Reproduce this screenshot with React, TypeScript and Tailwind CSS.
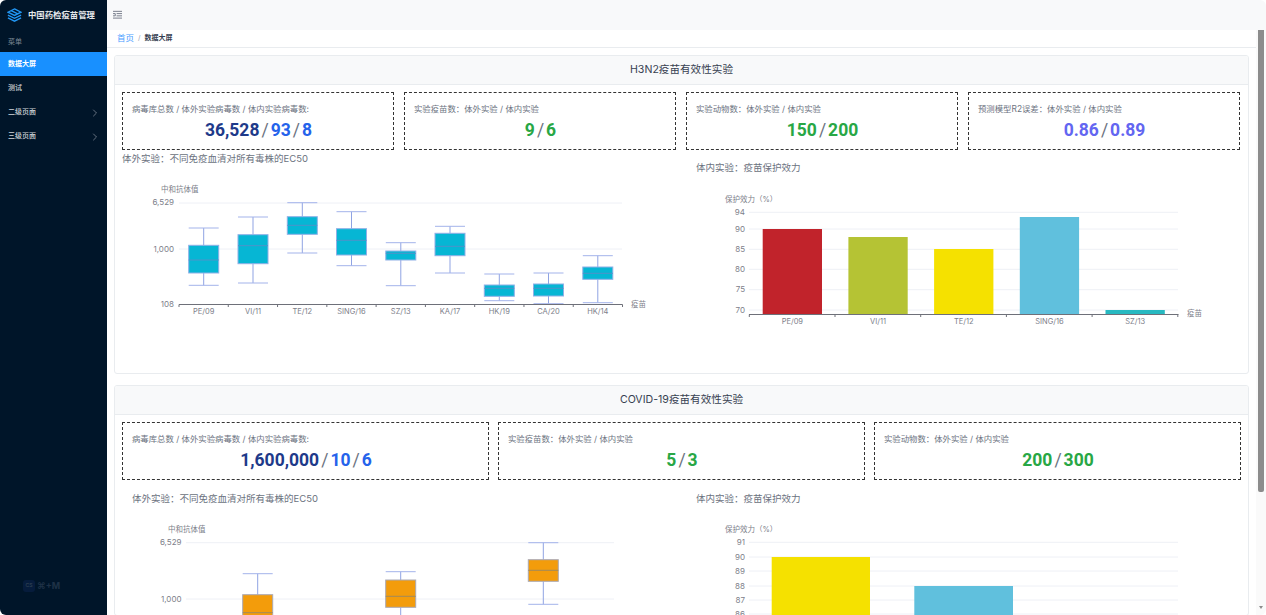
import { ChevronRight } from "lucide-react";

const labelFont = { fontFamily: "Inter, 'Noto Sans CJK SC', sans-serif" };

interface StatValue {
  text: string;
  color: string;
}

interface StatCardProps {
  label: string;
  values: StatValue[];
}

function StatCard({ label, values }: StatCardProps) {
  return (
    <div className="flex-1 h-[58px] border border-dashed border-[#333] pl-[9px] pr-2 pt-[10px]">
      <p className="text-[8.4px] leading-[12px] text-[#6b7280]">{label}</p>
      <div className="mt-[3px] flex items-center justify-center gap-[2px] text-[17.5px] leading-[24px] font-bold font-['Roboto']">
        {values.map((v, i) => (
          <span key={i} className="flex items-center gap-[2px]">
            {i > 0 && <span className="font-normal text-[#6b7280]">/</span>}
            <span style={{ color: v.color }}>{v.text}</span>
          </span>
        ))}
      </div>
    </div>
  );
}

interface BoxDatum {
  name?: string;
  cx: number;
  whiskerTop: number;
  top: number;
  median: number;
  bottom: number;
  whiskerBottom: number;
}

function BoxShape({ b, fill, edge, mid }: { b: BoxDatum; fill: string; edge: string; mid: string }) {
  const left = b.cx - 15;
  const right = b.cx + 15;
  return (
    <g>
      <line x1={b.cx} x2={b.cx} y1={b.whiskerTop} y2={b.top} stroke="#8fa3e3" strokeWidth="1" />
      <line x1={b.cx} x2={b.cx} y1={b.bottom} y2={b.whiskerBottom} stroke="#8fa3e3" strokeWidth="1" />
      <line x1={left} x2={right} y1={b.whiskerTop} y2={b.whiskerTop} stroke="#a3b3ea" strokeWidth="1" />
      <line x1={left} x2={right} y1={b.whiskerBottom} y2={b.whiskerBottom} stroke="#a3b3ea" strokeWidth="1" />
      <rect x={left} y={b.top} width="30" height={b.bottom - b.top} fill={fill} stroke={edge} strokeWidth="1" />
      <line x1={left} x2={right} y1={b.median} y2={b.median} stroke={mid} strokeWidth="1" />
    </g>
  );
}

const h3n2Boxes: BoxDatum[] = [
  { name: "PE/09", cx: 202.7, whiskerTop: 228, top: 245.3, median: 260, bottom: 273, whiskerBottom: 285.3 },
  { name: "VI/11", cx: 252, whiskerTop: 217, top: 234.7, median: 245.7, bottom: 263.7, whiskerBottom: 283 },
  { name: "TE/12", cx: 301.3, whiskerTop: 202.7, top: 216.7, median: 225.3, bottom: 234.3, whiskerBottom: 253 },
  { name: "SING/16", cx: 350.5, whiskerTop: 211.7, top: 228.7, median: 240.3, bottom: 255, whiskerBottom: 265.7 },
  { name: "SZ/13", cx: 399.8, whiskerTop: 242.7, top: 251, median: 253.3, bottom: 260, whiskerBottom: 285.7 },
  { name: "KA/17", cx: 449, whiskerTop: 226.3, top: 233.3, median: 246.3, bottom: 255.7, whiskerBottom: 273 },
  { name: "HK/19", cx: 498.3, whiskerTop: 274, top: 285, median: 288.3, bottom: 296.3, whiskerBottom: 300.7 },
  { name: "CA/20", cx: 547.5, whiskerTop: 273, top: 284, median: 288.3, bottom: 296, whiskerBottom: 303.7 },
  { name: "HK/14", cx: 596.8, whiskerTop: 255.7, top: 267, median: 273.3, bottom: 279.3, whiskerBottom: 302.7 },
];

const covidBoxes: BoxDatum[] = [
  { cx: 256.7, whiskerTop: 573.7, top: 594.7, median: 612.7, bottom: 640, whiskerBottom: 660 },
  { cx: 399.7, whiskerTop: 571.7, top: 580, median: 596.3, bottom: 607.3, whiskerBottom: 640 },
  { cx: 542.3, whiskerTop: 542.7, top: 559.7, median: 570.3, bottom: 581.3, whiskerBottom: 604.3 },
];

const gridLine = "#eef0f6";
const axisText = "#7d808a";

function H3n2BoxChart() {
  const ticks = Array.from({ length: 10 }, (_, i) => 178 + i * 49.28);
  return (
    <svg viewBox="114 175 560 150" className="w-[560px] h-[150px] block" style={labelFont}>
      <text x="160" y="192" fontSize="7.5" fill={axisText}>中和抗体值</text>
      <line x1="178" x2="621" y1="203" y2="203" stroke={gridLine} />
      <line x1="178" x2="621" y1="249" y2="249" stroke={gridLine} />
      <text x="173" y="205" fontSize="8" fill={axisText} textAnchor="end">6,529</text>
      <text x="173" y="251.500" fontSize="8" fill={axisText} textAnchor="end">1,000</text>
      <text x="173" y="306.500" fontSize="8" fill={axisText} textAnchor="end">108</text>
      {h3n2Boxes.map((b) => (
        <BoxShape key={b.name} b={b} fill="#06b6d4" edge="#8fb0e6" mid="#4f93c9" />
      ))}
      <line x1="178" x2="621.500" y1="304.500" y2="304.500" stroke="#6e7079" />
      {ticks.map((x) => (
        <line key={x} x1={x} x2={x} y1="304.500" y2="307" stroke="#6e7079" />
      ))}
      {h3n2Boxes.map((b) => (
        <text key={b.name} x={b.cx} y="314" fontSize="7.5" fill={axisText} textAnchor="middle">{b.name}</text>
      ))}
      <text x="630" y="306.500" fontSize="7.5" fill={axisText}>疫苗</text>
    </svg>
  );
}

interface BarChartProps {
  ticks: { label: string; y: number }[];
  bars: { name: string; x: number; w: number; top: number; color: string }[];
}

function H3n2BarChart({ ticks, bars }: BarChartProps) {
  const axisTicks = Array.from({ length: 6 }, (_, i) => 749.3 + i * 85.7);
  return (
    <svg viewBox="690 190 530 135" className="w-[530px] h-[135px] block" style={labelFont}>
      <text x="725" y="202" fontSize="7.5" fill={axisText}>保护效力（%）</text>
      {ticks.map((t) => (
        <g key={t.label}>
          <line x1="749" x2="1178" y1={t.y} y2={t.y} stroke={gridLine} />
          <text x="745" y={t.y + 2.7} fontSize="8" fill={axisText} textAnchor="end">{t.label}</text>
        </g>
      ))}
      {bars.map((b) => (
        <rect key={b.name} x={b.x} y={b.top} width={b.w} height={314.5 - b.top} fill={b.color} />
      ))}
      <line x1="749" x2="1178.500" y1="314.500" y2="314.500" stroke="#6e7079" />
      {axisTicks.map((x) => (
        <line key={x} x1={x} x2={x} y1="314.500" y2="317" stroke="#6e7079" />
      ))}
      {bars.map((b) => (
        <text key={b.name} x={b.x + b.w / 2} y="324" fontSize="7.5" fill={axisText} textAnchor="middle">{b.name}</text>
      ))}
      <text x="1187" y="316" fontSize="7.5" fill={axisText}>疫苗</text>
    </svg>
  );
}

function CovidBoxChart() {
  return (
    <svg viewBox="124 520 540 95" className="w-[540px] h-[95px] block" style={labelFont}>
      <text x="167" y="532" fontSize="7.5" fill={axisText}>中和抗体值</text>
      <line x1="185" x2="613" y1="542.700" y2="542.700" stroke={gridLine} />
      <line x1="185" x2="613" y1="599" y2="599" stroke={gridLine} />
      <text x="180.500" y="545" fontSize="8" fill={axisText} textAnchor="end">6,529</text>
      <text x="180.500" y="601.500" fontSize="8" fill={axisText} textAnchor="end">1,000</text>
      {covidBoxes.map((b) => (
        <BoxShape key={b.cx} b={b} fill="#f39c0b" edge="#a9a9b5" mid="#a08a5c" />
      ))}
    </svg>
  );
}

function CovidBarChart() {
  const ticks = [
    { label: "91", y: 542.3 },
    { label: "90", y: 557 },
    { label: "89", y: 571 },
    { label: "88", y: 586 },
    { label: "87", y: 600 },
    { label: "86", y: 614 },
  ];
  return (
    <svg viewBox="690 520 530 95" className="w-[530px] h-[95px] block" style={labelFont}>
      <text x="725" y="532" fontSize="7.500" fill={axisText}>保护效力（%）</text>
      {ticks.map((t) => (
        <g key={t.label}>
          <line x1="749" x2="1178" y1={t.y} y2={t.y} stroke={gridLine} />
          <text x="745" y={t.y + 2.7} fontSize="8" fill={axisText} textAnchor="end">{t.label}</text>
        </g>
      ))}
      <rect x="771.700" y="557" width="98.300" height="60" fill="#f5e100" />
      <rect x="914.300" y="586" width="98.700" height="31" fill="#60c0dd" />
    </svg>
  );
}

function Section({ title, children }: { title: string; children: React.ReactNode }) {
  return (
    <section className="border border-[#e9ecef] rounded-[3px] bg-white overflow-hidden">
      <div className="h-[29px] bg-[#f8f9fa] border-b border-[#e9ecef] flex items-center justify-center text-[10.6px] text-[#374151]">
        {title}
      </div>
      {children}
    </section>
  );
}

const blue = "#1e3a8a";
const midBlue = "#2563eb";
const green = "#28a745";
const violet = "#6366f1";

const virusLabel = "病毒库总数 / 体外实验病毒数 / 体内实验病毒数:";

const menu = [
  { label: "测试" },
  { label: "二级页面", arrow: true },
  { label: "三级页面", arrow: true },
];

export default function App() {
  const h3n2Ticks = [
    { label: "94", y: 212.3 },
    { label: "90", y: 229 },
    { label: "85", y: 249.3 },
    { label: "80", y: 269.3 },
    { label: "75", y: 289.7 },
    { label: "70", y: 310 },
  ];
  const h3n2Bars = [
    { name: "PE/09", x: 762.7, w: 59.3, top: 229, color: "#c1232b" },
    { name: "VI/11", x: 848.4, w: 59.3, top: 237, color: "#b5c334" },
    { name: "TE/12", x: 934.1, w: 59.3, top: 249, color: "#f5e100" },
    { name: "SING/16", x: 1019.8, w: 59.3, top: 217, color: "#60c0dd" },
    { name: "SZ/13", x: 1105.5, w: 59.3, top: 310, color: "#27b9c1" },
  ];

  return (
    <div
      className="h-[615px] w-[1266px] flex overflow-hidden rounded-[6px] bg-white"
      style={{ fontFamily: "Inter, 'Noto Sans CJK SC', sans-serif" }}
    >
      <aside className="w-[107px] shrink-0 bg-[#001529] text-white flex flex-col relative">
        <div className="h-[30px] flex items-center pl-[7px] gap-[6px]">
          <svg viewBox="0 0 16 16" className="w-[15px] h-[15px]" fill="none" stroke="#2196f3" strokeWidth="1.5">
            <path d="M8 1 15 4.500 8 8 1 4.500Z" />
            <path d="M1 7.500 8 11 15 7.500" />
            <path d="M1 10.500 8 14 15 10.500" />
            <path d="M4.500 2.800 11.500 6.300" />
          </svg>
          <span className="text-[8.4px] font-semibold text-[#e5e7eb]">中国药检疫苗管理</span>
        </div>
        <div className="pl-2 pt-[6px] h-[22px] text-[7px] leading-[12px] text-[#7b8794]">菜单</div>
        <div className="h-[24px] bg-[#1890ff] pl-2 pt-[1px] flex items-center text-[7px] font-semibold">数据大屏</div>
        {menu.map((m) => (
          <div key={m.label} className="h-[24px] pl-2 pr-[6px] pt-[1px] flex items-center justify-between text-[7px] font-medium text-[#d1d5db]">
            <span>{m.label}</span>
            {m.arrow && <ChevronRight className="w-[12px] h-[12px] text-[#9ca3af]" strokeWidth={1.3} />}
          </div>
        ))}
        <div className="absolute left-[23px] top-[579px] flex items-center gap-[2px] opacity-20">
          <span className="w-[12px] h-[12px] rounded-[3px] bg-[#1e3a8a] text-[5px] flex items-center justify-center">CS</span>
          <span className="text-[9px] font-bold text-[#94a3b8]">⌘+M</span>
        </div>
      </aside>

      <div className="flex-1 min-w-0 flex flex-col">
        <header className="h-[30px] shrink-0 bg-[#f8f9fa] flex items-center pl-[6px] pb-[1px]">
          <svg viewBox="0 0 10 10" className="w-[9px] h-[9px]" fill="none" stroke="#6b7280" strokeWidth="1">
            <path d="M0 1.500H10M4 4H10M4 6.500H10M0 9H10M0 4H2.500V6.500H0" />
          </svg>
        </header>
        <div className="flex-1 min-h-0 flex">
          <main className="flex-1 min-w-0 overflow-hidden">
            <div className="h-[18px] border-b border-[#e9ecef] pl-[10px] flex items-center gap-[4px] text-[7px]">
              <span className="text-[8.5px] text-[#4a9eff]">首页</span>
              <span className="text-[#9ca3af]">/</span>
              <span className="font-semibold text-[#374151]">数据大屏</span>
            </div>
            <div className="pl-[7px] pr-[7px] pt-[7px] flex flex-col gap-[11px]">
              <Section title="H3N2疫苗有效性实验">
                <div className="px-[7px] pt-[7px] flex gap-[10px] mr-[1px]">
                  <StatCard label={virusLabel} values={[{ text: "36,528", color: blue }, { text: "93", color: midBlue }, { text: "8", color: midBlue }]} />
                  <StatCard label="实验疫苗数：体外实验 / 体内实验" values={[{ text: "9", color: green }, { text: "6", color: green }]} />
                  <StatCard label="实验动物数：体外实验 / 体内实验" values={[{ text: "150", color: green }, { text: "200", color: green }]} />
                  <StatCard label="预测模型R2误差：体外实验 / 体内实验" values={[{ text: "0.86", color: violet }, { text: "0.89", color: violet }]} />
                </div>
                <div className="flex h-[223px]">
                  <div className="w-[575px] pl-[7px] pt-[1px]">
                    <p className="h-[15px] text-[9.5px] leading-[15px] text-[#6b7280]">体外实验：不同免疫血清对所有毒株的EC50</p>
                    <div className="-ml-[7px] mt-[9px]"><H3n2BoxChart /></div>
                  </div>
                  <div className="flex-1 pl-[6px] pt-[10px]">
                    <p className="h-[15px] text-[9.5px] leading-[15px] text-[#6b7280]">体内实验：疫苗保护效力</p>
                    <div className="-ml-[6px] mt-[15px]"><H3n2BarChart ticks={h3n2Ticks} bars={h3n2Bars} /></div>
                  </div>
                </div>
              </Section>
              <Section title="COVID-19疫苗有效性实验">
                <div className="px-[7px] pt-[7px] flex gap-[9px]">
                  <StatCard label={virusLabel} values={[{ text: "1,600,000", color: blue }, { text: "10", color: midBlue }, { text: "6", color: midBlue }]} />
                  <StatCard label="实验疫苗数：体外实验 / 体内实验" values={[{ text: "5", color: green }, { text: "3", color: green }]} />
                  <StatCard label="实验动物数：体外实验 / 体内实验" values={[{ text: "200", color: green }, { text: "300", color: green }]} />
                </div>
                <div className="flex pt-[11px]">
                  <div className="w-[575px] pl-[17px]">
                    <p className="h-[15px] text-[9.5px] leading-[15px] text-[#6b7280]">体外实验：不同免疫血清对所有毒株的EC50</p>
                    <div className="-ml-[7px] mt-[14px]"><CovidBoxChart /></div>
                  </div>
                  <div className="flex-1 pl-[6px]">
                    <p className="h-[15px] text-[9.5px] leading-[15px] text-[#6b7280]">体内实验：疫苗保护效力</p>
                    <div className="-ml-[6px] mt-[14px]"><CovidBarChart /></div>
                  </div>
                </div>
              </Section>
            </div>
          </main>
          <div className="w-[10px] shrink-0 bg-[#fafafa] flex flex-col items-start pl-[2px] pb-[6px]">
            <div className="h-[462px] w-[6px] rounded-b-[2px] bg-[#8c8c8c]" />
            <div className="mt-auto ml-[1px] border-x-[2.5px] border-t-[3px] border-x-transparent border-t-[#8c8c8c]" />
          </div>
        </div>
      </div>
    </div>
  );
}
